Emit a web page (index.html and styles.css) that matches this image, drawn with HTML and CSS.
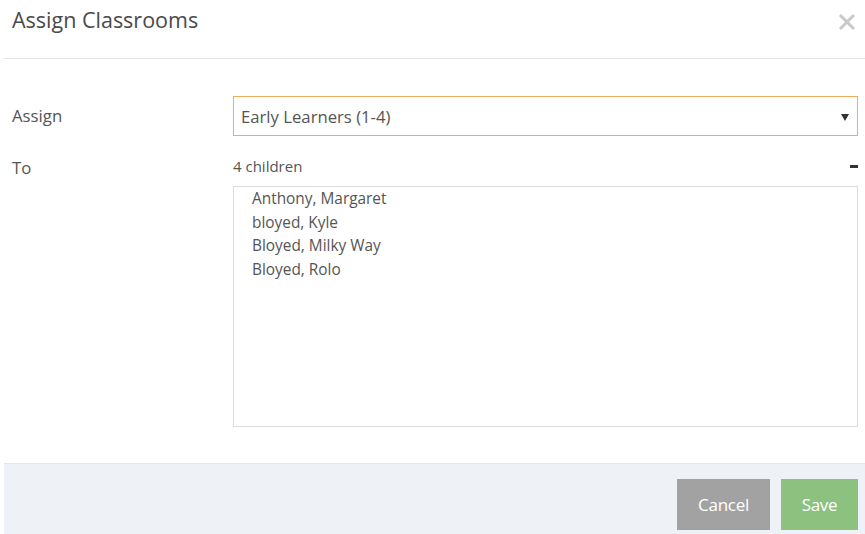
FILE: index.html
```html
<!DOCTYPE html>
<html>
<head>
<meta charset="utf-8">
<link rel="stylesheet" href="styles.css">
</head>
<body>
<div class="modal">
  <div class="modal-header">
    <h1 class="title">Assign Classrooms</h1>
    <svg class="close" width="18" height="18" viewBox="0 0 18 18"><path d="M2 2 L16 16 M16 2 L2 16" stroke="#c9c9c9" stroke-width="3" stroke-linecap="butt"/></svg>
  </div>
  <div class="modal-body">
    <div class="row row-assign">
      <label class="label">Assign</label>
      <div class="select">
        <span class="select-text">Early Learners (1-4)</span>
        <span class="caret"></span>
      </div>
    </div>
    <div class="row row-to">
      <label class="label label-to">To</label>
      <div class="field">
        <div class="count-line">
          <span class="count">4 children</span>
          <span class="collapse"></span>
        </div>
        <div class="listbox">
          <div class="item">Anthony, Margaret</div>
          <div class="item">bloyed, Kyle</div>
          <div class="item">Bloyed, Milky Way</div>
          <div class="item">Bloyed, Rolo</div>
        </div>
      </div>
    </div>
  </div>
  <div class="modal-footer">
    <button class="btn btn-cancel">Cancel</button>
    <button class="btn btn-save">Save</button>
  </div>
</div>
</body>
</html>
```
FILE: styles.css
```css
html, body {
  margin: 0;
  padding: 0;
  background: #ffffff;
  font-family: "Open Sans", "Noto Sans", sans-serif;
  color: #555555;
}
.modal {
  margin-left: 4px;
  width: 861px;
  height: 534px;
  display: flex;
  flex-direction: column;
}
.modal-header {
  height: 59px;
  border-bottom: 1px solid #e5e5e5;
  display: flex;
  justify-content: space-between;
  align-items: flex-start;
  padding: 0 9px 0 8px;
  box-sizing: border-box;
}
.title {
  margin: 5px 0 0 0;
  font-size: 21.5px;
  font-weight: 400;
  color: #4a4a4a;
  line-height: 30px;
}
.close {
  margin-top: 13px;
  display: block;
}
.modal-body {
  flex: 1;
  padding: 37px 7px 0 8px;
  box-sizing: border-box;
}
.row {
  display: flex;
}
.label {
  width: 221px;
  font-size: 16.8px;
  color: #555555;
}
.row-assign .label {
  line-height: 40px;
}
.select {
  flex: 1;
  height: 40px;
  box-sizing: border-box;
  border: 1px solid #efad5b;
  display: flex;
  align-items: center;
  justify-content: space-between;
  padding: 0 8px 0 7px;
}
.select-text {
  font-size: 16.7px;
  color: #555555;
}
.caret {
  width: 0;
  height: 0;
  border-left: 4px solid transparent;
  border-right: 4px solid transparent;
  border-top: 7px solid #333333;
  margin-top: 2px;
}
.row-to {
  margin-top: 19px;
}
.label-to {
  line-height: 24px;
  margin-top: 1px;
}
.field {
  flex: 1;
}
.count-line {
  display: flex;
  justify-content: space-between;
  align-items: center;
  height: 22px;
}
.count {
  font-size: 15px;
  color: #555555;
}
.collapse {
  width: 8px;
  height: 3px;
  background: #333333;
}
.listbox {
  margin-top: 9px;
  height: 241px;
  box-sizing: border-box;
  border: 1px solid #dcdcdc;
  padding: 0 0 0 18px;
}
.item {
  font-size: 15.4px;
  line-height: 23.6px;
  color: #555555;
}
.modal-footer {
  height: 71px;
  background: #eef1f6;
  border-top: 1px solid #e3e6ea;
  box-sizing: border-box;
  display: flex;
  justify-content: flex-end;
  align-items: flex-start;
  gap: 11px;
  padding: 15px 7px 0 0;
}
.btn {
  border: none;
  height: 51px;
  color: #ffffff;
  font-family: "Open Sans", sans-serif;
  font-size: 17px;
  letter-spacing: -0.3px;
  padding: 0;
  cursor: pointer;
}
.btn-cancel {
  width: 93px;
  background: #a2a2a2;
}
.btn-save {
  width: 77px;
  background: #8cc17f;
}
```
